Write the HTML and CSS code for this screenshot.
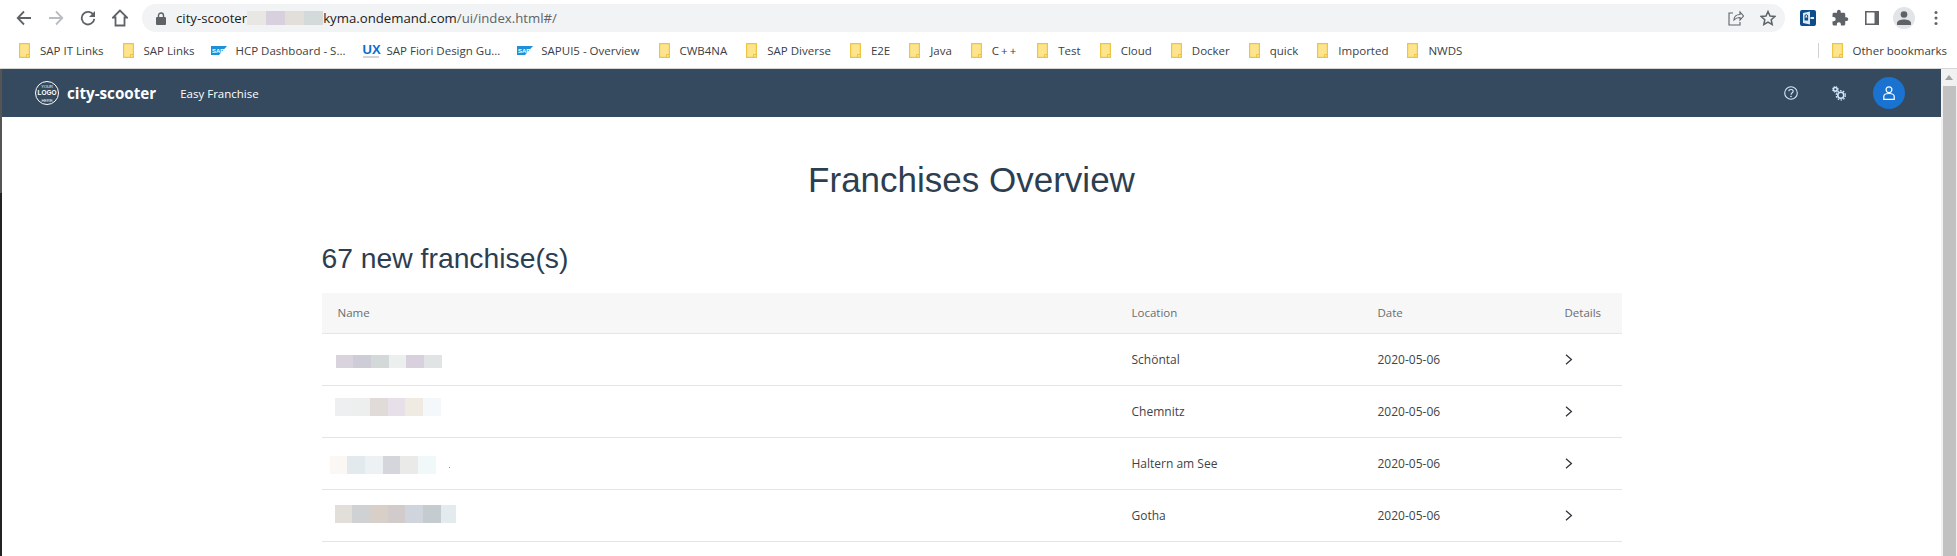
FILE: index.html
```html
<!DOCTYPE html>
<html>
  <head>
    <title>Franchises Overview</title>
    <link rel="stylesheet" href="styles.css">
  </head>
  <body>
    <svg class="defs">
      <symbol id="folder" viewBox="0 0 11 15">
        <path d="M.6.6h9.800v13.800H.6z" fill="#fde48d" stroke="#ecc545" stroke-width="1.200"/>
        <path d="M7.500 14.500v-3h3" fill="none" stroke="#ecc545"/>
      </symbol>
      <symbol id="saplogo" viewBox="0 0 16 9">
        <path d="M0 0h16L8 9H0z" fill="#1f8fd8"/>
        <text x="1" y="6.600" font-size="6" font-weight="700" fill="#fff" font-family="Liberation Sans, sans-serif">SAP</text>
      </symbol>
      <symbol id="chevron" viewBox="0 0 8 11">
        <path d="M1 .8l5.400 4.700L1 10.200" fill="none" stroke="#32363a" stroke-width="1.300"/>
      </symbol>
    </svg>

    <div class="toolbar">
      <button class="tool">
        <svg width="16" height="16" viewBox="0 0 16 16"><path d="M15 8H2M8 1.500L1.700 8 8 14.500" fill="none" stroke="#5f6368" stroke-width="1.800"/></svg>
      </button>
      <button class="tool">
        <svg width="16" height="16" viewBox="0 0 16 16"><path d="M1 8h13M8 1.500L14.300 8 8 14.500" fill="none" stroke="#b9bcc0" stroke-width="1.800"/></svg>
      </button>
      <button class="tool">
        <svg width="16" height="16" viewBox="0 0 16 16"><path d="M13.500 5A6.300 6.300 0 1 0 14.300 8.800" fill="none" stroke="#5f6368" stroke-width="1.800"/><path d="M15 1v6H9z" fill="#5f6368"/></svg>
      </button>
      <button class="tool">
        <svg width="16" height="18" viewBox="0 0 16 18"><path d="M8 1.500L1 8.500h2.500V16.500h9V8.500H15z" fill="none" stroke="#5f6368" stroke-width="1.800"/></svg>
      </button>

      <div class="urlbar">
        <svg class="lock" width="10" height="13" viewBox="0 0 10 13"><path d="M2.500 5V3.500a2.500 2.500 0 0 1 5 0V5" fill="none" stroke="#5f6368" stroke-width="1.400"/><rect y="5" width="10" height="8" rx="1" fill="#5f6368"/></svg>
        <span class="host">city-scooter</span>
        <span class="blur url-blur">
          <i class="c-a"></i><i class="c-b"></i><i class="c-c"></i><i class="c-d"></i>
        </span>
        <span class="host">kyma.ondemand.com</span><span class="path">/ui/index.html#/</span>
        <span class="url-actions">
          <svg width="16" height="16" viewBox="0 0 16 16"><path d="M5 3H1v12h11v-3M6 10c0-3.500 2.500-5.500 6-5.500V2l3.500 4-3.500 4V7.500C9.500 7.500 7.500 8.300 6 10z" fill="none" stroke="#5f6368" stroke-width="1.100"/></svg>
          <svg width="16" height="16" viewBox="0 0 16 16"><path d="M8 1.500l2 4.500 4.800.5-3.600 3.200 1 4.800L8 12.100l-4.200 2.400 1-4.800L1.200 6.500 6 6z" fill="none" stroke="#5f6368" stroke-width="1.500"/></svg>
        </span>
      </div>

      <button class="tool">
        <svg width="16" height="16" viewBox="0 0 16 16"><rect width="16" height="16" rx="2" fill="#0f4c8a"/><path d="M3 3l7-1.500v13L3 13z" fill="#dbe8f5"/><path d="M5 7.500V6a1.300 1.300 0 0 1 2.600 0v1.500" fill="none" stroke="#0f4c8a"/><rect x="4.500" y="7.500" width="3.600" height="3" fill="#0f4c8a"/><path d="M10.500 8H14" stroke="#fff" stroke-width="1.800"/></svg>
      </button>
      <button class="tool">
        <svg width="18" height="18" viewBox="0 0 24 24"><path d="M20.500 11H19V7c0-1.100-.9-2-2-2h-4V3.500C13 2.120 11.880 1 10.500 1S8 2.120 8 3.500V5H4c-1.100 0-1.990.9-1.990 2v3.800H3.500c1.490 0 2.700 1.210 2.700 2.700s-1.210 2.700-2.700 2.700H2V20c0 1.100.9 2 2 2h3.800v-1.500c0-1.490 1.210-2.700 2.700-2.700 1.490 0 2.700 1.210 2.700 2.700V22H17c1.100 0 2-.9 2-2v-4h1.500c1.380 0 2.500-1.120 2.500-2.500S21.880 11 20.500 11z" fill="#5f6368"/></svg>
      </button>
      <button class="tool">
        <svg width="14" height="14" viewBox="0 0 14 14"><path d="M.8.8h12.400v12.400H.8z" fill="#fff" stroke="#5f6368" stroke-width="1.600"/><path d="M9.500 1H13v12H9.500z" fill="#5f6368"/></svg>
      </button>
      <button class="tool">
        <span class="profile">
          <svg width="14" height="14" viewBox="0 0 14 14"><circle cx="7" cy="3.500" r="3.300" fill="#5f6368"/><path d="M0 14v-2c0-2.500 4-3.500 7-3.500s7 1 7 3.500v2z" fill="#5f6368"/></svg>
        </span>
      </button>
      <button class="tool">
        <svg width="4" height="14" viewBox="0 0 4 14"><circle cx="2" cy="1.500" r="1.500" fill="#5f6368"/><circle cx="2" cy="7" r="1.500" fill="#5f6368"/><circle cx="2" cy="12.500" r="1.500" fill="#5f6368"/></svg>
      </button>
    </div>

    <div class="bookmarks">
      <a class="mark"><svg class="icon"><use href="#folder"/></svg>SAP IT Links</a>
      <a class="mark"><svg class="icon"><use href="#folder"/></svg>SAP Links</a>
      <a class="mark"><svg class="icon-sap"><use href="#saplogo"/></svg>HCP Dashboard - S...</a>
      <a class="mark"><span class="icon-ux">UX</span>SAP Fiori Design Gu...</a>
      <a class="mark"><svg class="icon-sap"><use href="#saplogo"/></svg>SAPUI5 - Overview</a>
      <a class="mark"><svg class="icon"><use href="#folder"/></svg>CWB4NA</a>
      <a class="mark"><svg class="icon"><use href="#folder"/></svg>SAP Diverse</a>
      <a class="mark"><svg class="icon"><use href="#folder"/></svg>E2E</a>
      <a class="mark"><svg class="icon"><use href="#folder"/></svg>Java</a>
      <a class="mark spaced"><svg class="icon"><use href="#folder"/></svg>C++</a>
      <a class="mark"><svg class="icon"><use href="#folder"/></svg>Test</a>
      <a class="mark"><svg class="icon"><use href="#folder"/></svg>Cloud</a>
      <a class="mark"><svg class="icon"><use href="#folder"/></svg>Docker</a>
      <a class="mark"><svg class="icon"><use href="#folder"/></svg>quick</a>
      <a class="mark"><svg class="icon"><use href="#folder"/></svg>Imported</a>
      <a class="mark"><svg class="icon"><use href="#folder"/></svg>NWDS</a>
      <span class="other">
        <a class="mark"><svg class="icon"><use href="#folder"/></svg>Other bookmarks</a>
      </span>
    </div>

    <div class="window">
      <div class="page">
        <header class="navbar">
          <svg class="logo" width="24" height="24" viewBox="0 0 24 24">
            <circle cx="12" cy="12" r="11.500" fill="none" stroke="#fff"/>
            <text x="12" y="6.500" text-anchor="middle" font-size="4" fill="#fff" font-family="Liberation Sans, sans-serif">YOUR</text>
            <text x="12" y="14.300" text-anchor="middle" font-size="6.500" font-weight="700" fill="#fff" font-family="Liberation Sans, sans-serif">LOGO</text>
            <text x="12" y="21" text-anchor="middle" font-size="4" fill="#fff" font-family="Liberation Sans, sans-serif">HERE</text>
          </svg>
          <span class="brand">city-scooter</span>
          <span class="product">Easy Franchise</span>
          <span class="nav-right">
            <svg width="14" height="14" viewBox="0 0 14 14"><circle cx="7" cy="7" r="6.300" fill="none" stroke="#d1e8ff" stroke-width="1.100"/><path d="M4.800 5.300C4.800 2.800 9.200 2.800 9.200 5.300 9.200 6.800 7 6.800 7 8.800" fill="none" stroke="#d1e8ff" stroke-width="1.100"/><circle cx="7" cy="10.500" r=".8" fill="#d1e8ff"/></svg>
            <svg class="gears" width="14" height="15" viewBox="0 0 14 15"><circle cx="3.300" cy="3.300" r="1.900" fill="none" stroke="#d1e8ff" stroke-width="1.500"/><circle cx="3.300" cy="3.300" r="3" fill="none" stroke="#d1e8ff" stroke-width=".9" stroke-dasharray="1.200 1.200"/><circle cx="8.800" cy="9.300" r="3" fill="none" stroke="#d1e8ff" stroke-width="1.600"/><circle cx="8.800" cy="9.300" r="4.600" fill="none" stroke="#d1e8ff" stroke-width="1.200" stroke-dasharray="1.600 1.300"/></svg>
            <span class="avatar">
              <svg width="12" height="14" viewBox="0 0 12 14"><circle cx="6" cy="3.700" r="2.900" fill="none" stroke="#fff" stroke-width="1.200"/><path d="M.8 13.300V10.500C.8 8.500 2.500 7.500 6 7.500s5.200 1 5.200 3v2.800z" fill="none" stroke="#fff" stroke-width="1.200"/></svg>
            </span>
          </span>
        </header>

        <main class="content">
          <h1 class="title">Franchises Overview</h1>
          <h2 class="subtitle">67 new franchise(s)</h2>
          <table class="franchises">
            <thead>
              <tr>
                <th class="col-name">Name</th>
                <th class="col-location">Location</th>
                <th class="col-date">Date</th>
                <th>Details</th>
              </tr>
            </thead>
            <tbody>
              <tr>
                <td>
                  <span class="blur name-1">
                    <i class="c-e"></i><i class="c-f"></i><i class="c-g"></i><i class="c-h"></i><i class="c-b"></i><i class="c-i"></i>
                  </span>
                </td>
                <td>Schöntal</td>
                <td>2020-05-06</td>
                <td><svg class="chevron"><use href="#chevron"/></svg></td>
              </tr>
              <tr>
                <td>
                  <span class="blur name-2">
                    <i class="c-j"></i><i class="c-k"></i><i class="c-l"></i><i class="c-m"></i><i class="c-n"></i><i class="c-o"></i>
                  </span>
                </td>
                <td>Chemnitz</td>
                <td>2020-05-06</td>
                <td><svg class="chevron"><use href="#chevron"/></svg></td>
              </tr>
              <tr>
                <td>
                  <span class="blur name-3">
                    <i class="c-p"></i><i class="c-q"></i><i class="c-r"></i><i class="c-s"></i><i class="c-t"></i><i class="c-u"></i><b class="dot"></b>
                  </span>
                </td>
                <td>Haltern am See</td>
                <td>2020-05-06</td>
                <td><svg class="chevron"><use href="#chevron"/></svg></td>
              </tr>
              <tr>
                <td>
                  <span class="blur name-4">
                    <i class="c-v"></i><i class="c-w"></i><i class="c-x"></i><i class="c-y"></i><i class="c-z"></i><i class="c-aa"></i><i class="c-ab"></i>
                  </span>
                </td>
                <td>Gotha</td>
                <td>2020-05-06</td>
                <td><svg class="chevron"><use href="#chevron"/></svg></td>
              </tr>
            </tbody>
          </table>
        </main>
      </div>

      <div class="scrollbar">
        <span class="scroll-up"></span>
        <span class="scroll-thumb"></span>
      </div>
    </div>
  </body>
</html>
```

FILE: styles.css
```css
html, body { margin: 0; height: 100%; overflow: hidden; background: #fff; }
body { font-family: "Open Sans", "Noto Sans", sans-serif; display: flex; flex-direction: column; }
.defs { display: none; }

/* browser chrome */
.toolbar { display: flex; align-items: center; height: 36px; padding: 0 5px 0 8px; box-sizing: border-box; flex: none; }
.tool { width: 32px; height: 28px; padding: 0; border: none; background: none; display: flex; align-items: center; justify-content: center; flex: none; }
.urlbar { flex: 1; height: 28px; margin: 0 7px 0 6px; padding-left: 14px; background: #f1f3f4; border-radius: 14px; display: flex; align-items: center; font-size: 13.2px; color: #202124; }
.lock { margin-right: 10px; }
.path { color: #5f6368; }
.url-actions { margin-left: auto; margin-right: 9px; display: flex; gap: 16px; }
.profile { width: 22px; height: 22px; border-radius: 50%; background: #e2e4e8; display: flex; align-items: center; justify-content: center; }

.bookmarks { display: flex; align-items: center; height: 32px; padding: 0 0 4px 17px; box-sizing: border-box; flex: none; gap: 17px; font-size: 11.5px; color: #3c4043; }
.mark { display: flex; align-items: center; white-space: nowrap; }
.spaced { letter-spacing: 2px; }
.icon { width: 11px; height: 15px; margin: 0 10px 0 2px; }
.icon-sap { width: 16px; height: 9px; margin-right: 8px; }
.icon-ux { width: 16px; margin-right: 8px; color: #0a6ed1; font: 700 13px "Liberation Sans", sans-serif; border-bottom: 2px solid #d5d5d5; line-height: 13px; }
.other { margin-left: auto; padding-left: 11px; padding-right: 10px; border-left: 1px solid #d0d2d5; }

/* app */
.window { flex: 1; display: flex; min-height: 0; border-top: 1px solid #d5d5d5; padding-left: 2px; background: linear-gradient(#555 124px, #222 124px) no-repeat 0 0 / 2px 100%; }
.page { flex: 1; min-width: 0; background: #fff; }
.navbar { height: 48px; background: #354a5f; display: flex; align-items: center; padding-left: 33px; color: #fff; }
.logo { margin-right: 8px; }
.brand { font-size: 15.2px; font-weight: 700; }
.product { margin-left: 24px; font-size: 11.5px; font-weight: 500; }
.nav-right { margin-left: auto; display: flex; align-items: center; margin-right: 36px; }
.gears { margin-left: 34px; }
.avatar { margin-left: 27px; width: 32px; height: 32px; border-radius: 50%; background: #1a73d0; display: flex; align-items: center; justify-content: center; }

.content { width: 1300px; margin: 0 auto; color: #2c3e50; }
.title { margin: 0; padding-top: 41px; font: 400 35px/44px "Liberation Sans", sans-serif; text-align: center; }
.subtitle { margin: 0; padding-top: 39px; font: 400 28.3px/34px "Liberation Sans", sans-serif; }

.franchises { width: 100%; margin-top: 18px; border-collapse: separate; border-spacing: 0; table-layout: fixed; font-size: 12px; color: #3f4347; }
.franchises th { height: 41px; padding: 0 0 1px 16px; background: #f7f7f7; font-size: 11.5px; font-weight: 400; color: #6a6d70; text-align: left; border-bottom: 1px solid #e5e5e5; box-sizing: border-box; }
.franchises td { height: 52px; padding: 0 0 0 16px; border-bottom: 1px solid #e5e5e5; box-sizing: border-box; }
.col-name { width: 794px; }
.col-location { width: 246px; }
.col-date { width: 187px; }
.chevron { width: 8px; height: 11px; display: block; }

/* pixelated names */
.blur { display: flex; }
.blur i { display: block; width: 17.7px; }
.url-blur { height: 14px; }
.url-blur i { width: 19px; }
.name-1 { height: 13px; margin: 3px 0 0 -2px; }
.name-2 { height: 18px; margin: 0 0 10px -3px; }
.name-3 { height: 18px; margin: 2px 0 0 -8px; }
.name-4 { height: 18px; margin: 0 0 4px -3px; }
.dot { width: 1px; height: 1px; margin: 11px 0 0 13px; background: #6a9bc4; }
.c-a { background: #e9e7e4; }
.c-b { background: #d8d0dd; }
.c-c { background: #e2dfda; }
.c-d { background: #d4d9da; }
.c-e { background: #d8d3dc; }
.c-f { background: #cdccd7; }
.c-g { background: #d3d9d8; }
.c-h { background: #ecefee; }
.c-i { background: #e1e4e5; }
.c-j { background: #eeeff0; }
.c-k { background: #edefee; }
.c-l { background: #e0dbd8; }
.c-m { background: #e7e0e8; }
.c-n { background: #f0ebe2; }
.c-o { background: #f5f8fa; }
.c-p { background: #fbf7f5; }
.c-q { background: #e3eaed; }
.c-r { background: #eef1f3; }
.c-s { background: #d5d6dc; }
.c-t { background: #eaeae8; }
.c-u { background: #f1f8f9; }
.c-v { background: #e2dfda; }
.c-w { background: #cfd1d3; }
.c-x { background: #d8cfc9; }
.c-y { background: #d2cbcc; }
.c-z { background: #d0d4dc; }
.c-aa { background: #c5cccf; }
.blur .c-ab { background: #e4ebef; width: 15px; }

.scrollbar { width: 16px; flex: none; background: #f1f1f1; display: flex; flex-direction: column; align-items: center; }
.scroll-up { margin-top: 6px; border: 4px solid transparent; border-top: none; border-bottom: 5px solid #a3a3a3; }
.scroll-thumb { margin-top: 6px; width: 13px; flex: 1; background: #c1c1c1; }
```
